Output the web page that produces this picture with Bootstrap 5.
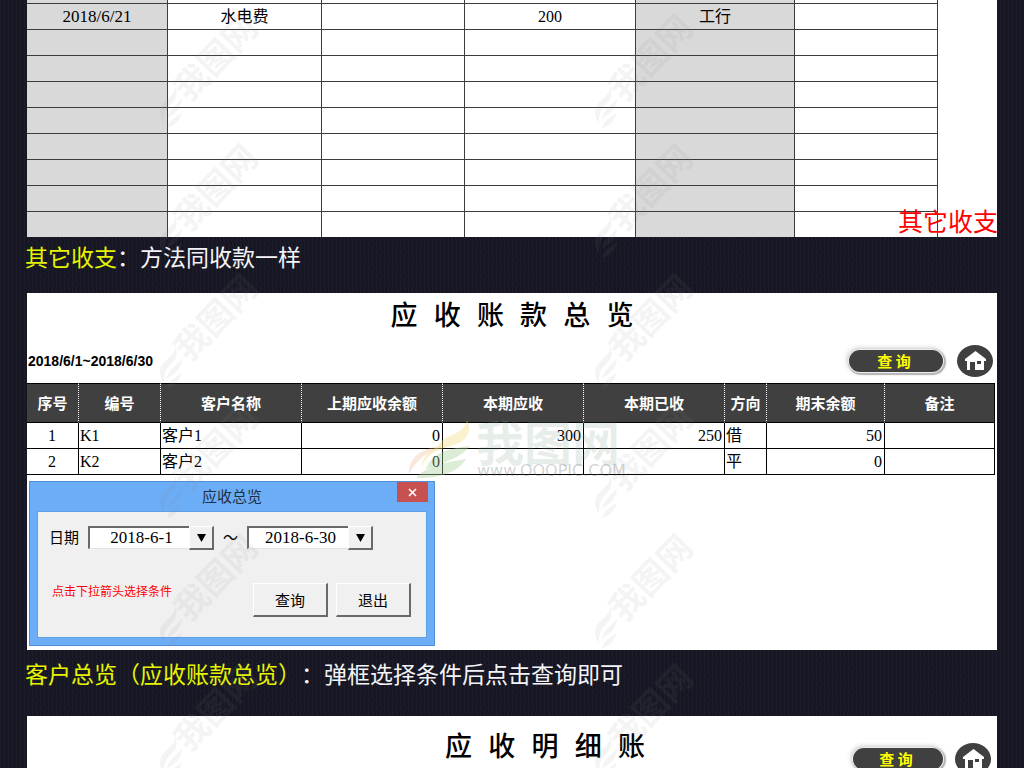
<!DOCTYPE html>
<html lang="zh-CN">
<head>
<meta charset="utf-8">
<meta name="viewport" content="width=device-width, initial-scale=1">
<title>应收账款总览</title>
<link href="https://cdn.jsdelivr.net/npm/bootstrap@5.3.0/dist/css/bootstrap.min.css" rel="stylesheet">
<style>
  body {
    font-family: "Liberation Serif", "Noto Sans CJK SC", sans-serif;
    font-size: 16px;
    color: #000;
    background-color: #181826;
    background-image:
      repeating-linear-gradient(90deg, rgba(255,255,255,.025) 0 1px, transparent 1px 4px),
      repeating-linear-gradient(60deg, rgba(0,0,0,.18) 0 1px, transparent 1px 3px);
  }
  .page { padding: 0 27px; }
  .sheet { background: #fff; }
  .sheet-table { table-layout: fixed; border-collapse: separate; border-spacing: 0; margin: 0; line-height: 25px; }
  .sheet-table th, .sheet-table td { padding: 0; white-space: nowrap; }

  /* ledger of other income and expenses */
  .ledger { width: 93.92%; }
  .ledger td { height: 26px; border-right: 1px solid #3c3c3c; border-bottom: 1px solid #3c3c3c; text-align: center; }
  .ledger tr:first-child td { height: 4px; }
  .ledger tr:last-child td { height: 25px; border-bottom: 0; }
  .ledger td:nth-child(1), .ledger td:nth-child(5) { background: #d9d9d9; }
  .date-cell { font-size: 17px; }
  .stamp { right: -1px; bottom: 1px; font: 25px/32px "Noto Sans CJK SC", sans-serif; color: #f00; }

  .note { font: 23px/38px "Noto Sans CJK SC", sans-serif; text-spacing-trim: space-all; color: #f4f4f8; margin: 0 0 18px -2px; }
  .note b { font-weight: 400; color: #e6f400; }
  .note-late { padding-top: 4px; margin-bottom: 24px; }

  .sheet-title { font: 500 27px/50px "Liberation Mono", "Noto Sans CJK SC", monospace; margin: 0; text-align: center; }
  .sheet-bar { padding: 2px 0 6px; }
  .period { font: bold 14px/20px "Liberation Sans", Arial, sans-serif; padding-left: 1px; }
  .tools { gap: 14px; padding-right: 4px; }
  .pill {
    width: 94px; height: 22px; padding: 0 4px 0 0; border: 0; border-radius: 11px;
    background: #404040; color: #ff0; font: bold 15px/20px "Noto Sans CJK SC", sans-serif;
    box-shadow: 0 0 0 1px #eee, 1px 1px 1px 2px #b5b5b5, -1px -1px 5px 1px #ccc;
  }
  .home { width: 36px; height: 32px; }
  .home svg { display: block; }

  .summary-wrap { padding-right: 2px; }
  .summary { width: 100%; }
  .summary th { height: 40px; border-top: 1px solid #000; border-bottom: 1px solid #000; border-right: 1px dotted #fff; background: #404040; color: #fff; text-align: center; font: bold 15px/36px "Noto Sans CJK SC", sans-serif; }
  .summary td { height: 26px; border-right: 1px solid #000; border-bottom: 1px solid #000; padding: 0 2px 0 1px; }
  .summary th:last-child { border-right: 1px solid #000; }

  .dialog-box { width: 406px; margin: 6px 0 0 2px; background: #6badf6; border: 1px solid #4f8fd6; padding: 0 7px 7px; }
  .dialog-head { height: 29px; font: 15px/28px "Noto Sans CJK SC", sans-serif; color: #1f2f45; }
  .close-x { top: 0; right: -1px; width: 31px; height: 20px; padding: 0; border: 0; background: #c75050; }
  .close-x svg { display: block; margin: auto; }
  .dialog-main { height: 127px; background: #f0f0f0; border: 1px solid #5f9fe6; padding: 14px 15px 0 11px; font: 15px/22px "Noto Sans CJK SC", sans-serif; }
  .label-date { margin-right: 9px; }
  .label-to { padding: 0 9px; }
  .combo { width: 126px; height: 24px; }
  .combo select {
    display: block; appearance: none; width: 102px; height: 23px; padding: 0 0 0 4px; border: 1px solid #e3e3e3;
    border-top: 2px solid #696969; border-left: 2px solid #696969; border-radius: 0; background: #fff; color: #000;
    font: 17px/20px "Liberation Serif", serif; text-align-last: center;
  }
  .combo i { width: 25px; height: 24px; right: 0; top: 0; pointer-events: none; }
  .raised { background: #f0f0f0; border: 1px solid #fff; border-right: 2px solid #696969; border-bottom: 2px solid #696969; }
  .act { width: 75px; height: 34px; padding: 0; color: #000; font: 15px/30px "Noto Sans CJK SC", sans-serif; }
  .act-row { padding-top: 33px; }
  .hint { font-size: 12px; line-height: 16px; color: #f00; padding-left: 3px; }

  .sheet-next .sheet-title { padding-left: 66px; }
  .sheet-next .tools { gap: 12px; margin-top: -31px; padding-right: 6px; }
  .sheet-next .pill { width: 90px; }

  .overlay { pointer-events: none; }
  .brand { left: 379px; top: 124px; width: 222px; height: 66px; overflow: visible; pointer-events: none; }
</style>
</head>
<body class="vh-100 overflow-hidden position-relative">
<main class="page">

  <section class="sheet position-relative">
    <table class="sheet-table ledger">
      <colgroup><col style="width:15.48%"><col style="width:16.9%"><col style="width:15.7%"><col style="width:18.77%"><col style="width:17.45%"><col style="width:15.7%"></colgroup>
      <tbody>
        <tr><td></td><td></td><td></td><td></td><td></td><td></td></tr>
        <tr><td class="date-cell">2018/6/21</td><td>水电费</td><td></td><td>200</td><td>工行</td><td></td></tr>
        <tr><td></td><td></td><td></td><td></td><td></td><td></td></tr>
        <tr><td></td><td></td><td></td><td></td><td></td><td></td></tr>
        <tr><td></td><td></td><td></td><td></td><td></td><td></td></tr>
        <tr><td></td><td></td><td></td><td></td><td></td><td></td></tr>
        <tr><td></td><td></td><td></td><td></td><td></td><td></td></tr>
        <tr><td></td><td></td><td></td><td></td><td></td><td></td></tr>
        <tr><td></td><td></td><td></td><td></td><td></td><td></td></tr>
        <tr><td></td><td></td><td></td><td></td><td></td><td></td></tr>
      </tbody>
    </table>
    <div class="stamp position-absolute">其它收支</div>
  </section>

  <p class="note"><b>其它收支</b>：方法同收款一样</p>

  <section class="sheet position-relative pb-1">
    <h1 class="sheet-title">应 收 账 款 总 览</h1>
    <div class="sheet-bar d-flex justify-content-between align-items-center">
      <div class="period">2018/6/1~2018/6/30</div>
      <div class="tools d-flex align-items-center">
        <button type="button" class="pill">查 询</button>
        <a href="#" class="home" aria-label="首页"><svg width="36" height="32" viewBox="0 0 36 32"><ellipse cx="18" cy="16" rx="18" ry="16" fill="#404040"/><path fill="#fff" fill-rule="evenodd" d="M18.500 6 29 14v2h-2v9h-9v-8h-5v8h-3v-9H8v-2zM20 16v3h4v-3z"/></svg></a>
      </div>
    </div>
    <div class="summary-wrap">
    <table class="sheet-table summary">
      <colgroup><col style="width:5.37%"><col style="width:8.47%"><col style="width:14.57%"><col style="width:14.57%"><col style="width:14.57%"><col style="width:14.57%"><col style="width:4.34%"><col style="width:12.19%"><col style="width:11.36%"></colgroup>
      <thead><tr><th>序号</th><th>编号</th><th>客户名称</th><th>上期应收余额</th><th>本期应收</th><th>本期已收</th><th>方向</th><th>期末余额</th><th>备注</th></tr></thead>
      <tbody>
        <tr><td class="text-center">1</td><td>K1</td><td>客户1</td><td class="text-end">0</td><td class="text-end">300</td><td class="text-end">250</td><td>借</td><td class="text-end">50</td><td></td></tr>
        <tr><td class="text-center">2</td><td>K2</td><td>客户2</td><td class="text-end">0</td><td></td><td></td><td>平</td><td class="text-end">0</td><td></td></tr>
      </tbody>
    </table>
    </div>

    <form class="dialog-box">
      <div class="dialog-head position-relative text-center">应收总览
        <button type="button" class="close-x position-absolute" aria-label="关闭"><svg width="9" height="9" viewBox="0 0 9 9"><path d="M1 1l7 7M8 1 1 8" stroke="#fff" stroke-width="1.6"/></svg></button>
      </div>
      <div class="dialog-main">
        <div class="d-flex">
          <label for="from" class="label-date">日期</label>
          <div class="combo position-relative"><select id="from"><option>2018-6-1</option></select><i class="raised position-absolute d-flex align-items-center justify-content-center"><svg width="9" height="8" viewBox="0 0 9 8"><path d="M0 0h9L4.500 8z"/></svg></i></div>
          <label for="to" class="label-to">～</label>
          <div class="combo position-relative"><select id="to"><option>2018-6-30</option></select><i class="raised position-absolute d-flex align-items-center justify-content-center"><svg width="9" height="8" viewBox="0 0 9 8"><path d="M0 0h9L4.500 8z"/></svg></i></div>
        </div>
        <div class="act-row d-flex justify-content-between">
          <div class="hint">点击下拉箭头选择条件</div>
          <div class="d-flex gap-2"><button type="button" class="raised act">查询</button><button type="button" class="raised act">退出</button></div>
        </div>
      </div>
    </form>

    <svg class="brand position-absolute" viewBox="0 0 222 66" aria-hidden="true">
      <path fill="#efb28c" fill-opacity=".3" d="M3 58C2 38 18 30 42 28 22 34 10 42 3 58z"/>
      <path fill="#f3df83" fill-opacity=".4" d="M32 30C36 16 58 20 61 3c6 14-2 22-16 26C30 33 20 38 16 50 16 40 22 34 32 30z"/>
      <path fill="#a9cf9b" fill-opacity=".4" d="M20 52c6-15 18-20 44-23C56 40 42 44 20 52zM10 61c12-13 28-15 50-19C52 56 30 62 10 61z"/>
      <text x="70" y="44" font-family="Noto Sans CJK SC, sans-serif" font-weight="700" font-size="48" fill="#7fa892" fill-opacity=".2">我图网</text>
      <text x="71" y="59" font-family="DejaVu Sans, sans-serif" font-size="16" fill="#666" fill-opacity=".3">www.OOOPIC.COM</text>
    </svg>
  </section>

  <p class="note note-late"><b>客户总览（应收账款总览）</b>：弹框选择条件后点击查询即可</p>

  <section class="sheet sheet-next pt-2">
    <h2 class="sheet-title">应 收 明 细 账</h2>
    <div class="tools d-flex align-items-center justify-content-end">
      <button type="button" class="pill">查 询</button>
      <a href="#" class="home" aria-label="首页"><svg width="36" height="32" viewBox="0 0 36 32"><ellipse cx="18" cy="16" rx="18" ry="16" fill="#404040"/><path fill="#fff" fill-rule="evenodd" d="M18.500 6 29 14v2h-2v9h-9v-8h-5v8h-3v-9H8v-2zM20 16v3h4v-3z"/></svg></a>
    </div>
  </section>
</main>

<svg class="overlay position-absolute top-0 start-0 w-100 h-100" aria-hidden="true">
  <defs>
    <pattern id="mark" x="150" y="8" width="435" height="130" patternUnits="userSpaceOnUse">
      <g fill="#808080" fill-opacity=".09">
        <text transform="translate(66 50) rotate(-46)" y="12" text-anchor="middle" font-family="Noto Sans CJK SC, sans-serif" font-weight="700" font-size="34">我图网</text>
        <path d="M25 77c2 12-14 14-15 27 0 5 2 9 4 11 0-10 2-14 8-20 5-5 6-11 3-18zM31 91c-3 6-13 10-14 20 5-5 13-6 15-20zM32 104c-4 5-12 6-15 16 7-2 13-7 15-16z"/>
      </g>
    </pattern>
  </defs>
  <rect width="100%" height="100%" fill="url(#mark)"/>
</svg>
<script src="https://cdn.jsdelivr.net/npm/bootstrap@5.3.0/dist/js/bootstrap.bundle.min.js"></script>
</body>
</html>
